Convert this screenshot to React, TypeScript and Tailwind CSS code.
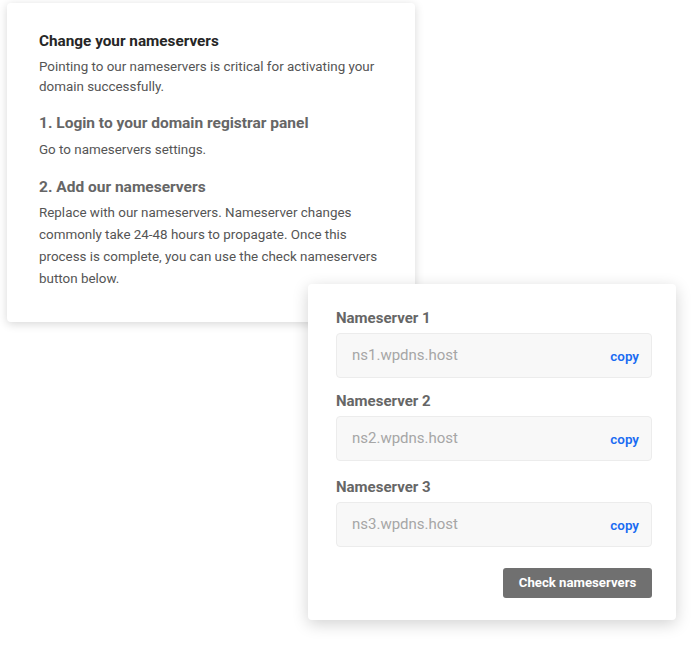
const nameservers = ['ns1.wpdns.host', 'ns2.wpdns.host', 'ns3.wpdns.host'];

function NameserverField({ index, host }: { index: number; host: string }) {
  return (
    <div>
      <div className="text-[15px] font-bold leading-5 text-[#666]">Nameserver {index}</div>
      <div className="mt-[5px] flex h-[45px] items-center justify-between rounded-[4px] border border-[#ececec] bg-[#f8f8f8] pl-[15px] pr-[12px]">
        <span className="text-[15px] text-[#a6a6a6]">{host}</span>
        <span className="pt-[3px] text-[13.4px] font-semibold text-[#1a6cf2]">copy</span>
      </div>
    </div>
  );
}

export default function App() {
  return (
    <div className="h-[650px] w-[695px] overflow-hidden bg-white pt-[3px] font-['Roboto',sans-serif]">
      {/* Instructions card */}
      <div className="relative ml-[7px] h-[319px] w-[408px] rounded-[4px] bg-white px-[32px] pt-[28px] shadow-[0_2px_10px_rgba(0,0,0,0.16)]">
        <h1 className="text-[15.3px] font-bold leading-5 text-[#262626]">Change your nameservers</h1>
        <p className="mt-[6px] text-[13.4px] leading-5 text-[#555]">
          Pointing to our nameservers is critical for activating your domain successfully.
        </p>
        <h2 className="mt-[16px] text-[15.5px] font-bold leading-5 text-[#666]">1. Login to your domain registrar panel</h2>
        <p className="mt-[7px] text-[13.4px] leading-5 text-[#555]">Go to nameservers settings.</p>
        <h2 className="mt-[17px] text-[15.5px] font-bold leading-5 text-[#666]">2. Add our nameservers</h2>
        <p className="mt-[5px] text-[13.4px] leading-[22px] text-[#555]">
          Replace with our nameservers. Nameserver changes commonly take 24-48 hours to propagate. Once this
          process is complete, you can use the check nameservers button below.
        </p>
      </div>

      {/* Nameservers card */}
      <div className="relative z-10 -mt-[38px] ml-[308px] h-[336px] w-[368px] rounded-[4px] bg-white pl-[28px] pr-[24px] pt-[24px] shadow-[0_4px_16px_rgba(0,0,0,0.18)]">
        <NameserverField index={1} host={nameservers[0]} />
        <div className="mt-[13px]">
          <NameserverField index={2} host={nameservers[1]} />
        </div>
        <div className="mt-[16px]">
          <NameserverField index={3} host={nameservers[2]} />
        </div>
        <div className="mt-[21px] flex justify-end">
          <button className="h-[30px] w-[149px] rounded-[3px] bg-[#707070] text-[13.2px] font-bold text-white">
            Check nameservers
          </button>
        </div>
      </div>
    </div>
  );
}
